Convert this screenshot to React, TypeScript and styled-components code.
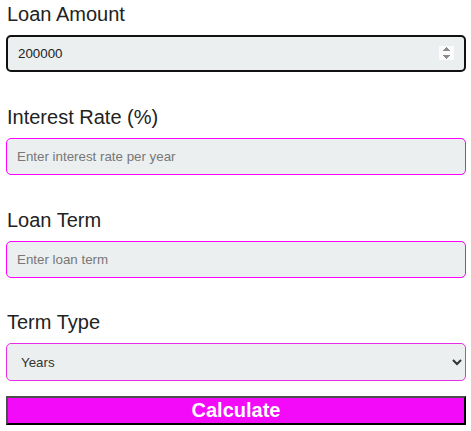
import React from 'react';
import styled, { createGlobalStyle } from 'styled-components';

const GlobalStyle = createGlobalStyle`
  body {
    margin: 0;
    background: #fff;
    font-family: "Liberation Sans", Arial, sans-serif;
  }
`;

const Form = styled.form`
  display: flex;
  flex-direction: column;
  padding: 3px 5px 0 6px;
  width: 460px;
`;

const Field = styled.div<{ $gap?: number }>`
  display: flex;
  flex-direction: column;
  margin-bottom: ${(p) => p.$gap ?? 34}px;
`;

const Label = styled.label`
  font-size: 20px;
  line-height: 23px;
  color: #222;
  margin-bottom: 9px;
  padding-left: 1px;
`;

const Input = styled.input<{ $active?: boolean }>`
  box-sizing: border-box;
  width: 100%;
  height: 37px;
  padding: 0 10px;
  font-family: "Liberation Sans", Arial, sans-serif;
  font-size: 13.33px;
  color: #222;
  background: #ecefef;
  border: ${(p) => (p.$active ? '2px solid #111' : '1px solid #f0f')};
  border-radius: 5px;
  outline: none;

  &::placeholder {
    color: #777;
  }

  &::-webkit-inner-spin-button,
  &::-webkit-outer-spin-button {
    ${(p) => (p.$active ? 'opacity: 1;' : '-webkit-appearance: none; margin: 0;')}
  }
`;

const Select = styled.select`
  box-sizing: border-box;
  width: 100%;
  height: 38px;
  padding: 0 6px 0 10px;
  font-family: "Liberation Sans", Arial, sans-serif;
  font-size: 13.33px;
  color: #333;
  background: #ecefef;
  border: 1px solid #e62ee6;
  border-radius: 5px;
  outline: none;
`;

const Button = styled.button`
  box-sizing: border-box;
  width: 100%;
  height: 29px;
  padding: 0;
  font-family: "Liberation Sans", Arial, sans-serif;
  font-size: 20px;
  font-weight: bold;
  color: #fff;
  background: #f20af9;
  border: 2px solid;
  border-color: #4d4d4d #000 #000 #4d4d4d;
  cursor: pointer;
`;

const App: React.FC = () => (
  <>
    <GlobalStyle />
    <Form onSubmit={(e) => e.preventDefault()}>
      <Field>
        <Label htmlFor="amount">Loan Amount</Label>
        <Input id="amount" type="number" defaultValue={200000} $active autoFocus />
      </Field>
      <Field>
        <Label htmlFor="rate">Interest Rate (%)</Label>
        <Input id="rate" type="number" placeholder="Enter interest rate per year" />
      </Field>
      <Field $gap={33}>
        <Label htmlFor="term">Loan Term</Label>
        <Input id="term" type="number" placeholder="Enter loan term" />
      </Field>
      <Field $gap={15}>
        <Label htmlFor="type">Term Type</Label>
        <Select id="type" defaultValue="years">
          <option value="years">Years</option>
          <option value="months">Months</option>
        </Select>
      </Field>
      <Button type="submit">Calculate</Button>
    </Form>
  </>
);

export default App;
